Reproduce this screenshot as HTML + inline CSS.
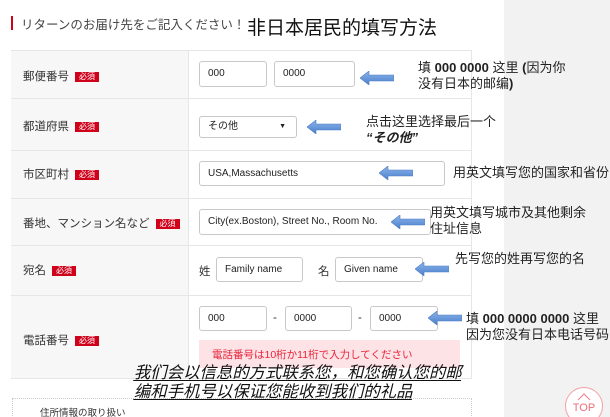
<!DOCTYPE html>
<html><head><meta charset="utf-8"><style>
*{margin:0;padding:0;box-sizing:border-box}
html,body{width:610px;height:417px;overflow:hidden}
body{background:#fff;position:relative;font-family:"Liberation Sans","Noto Sans CJK JP",sans-serif;color:#333}
.a{position:absolute}
.gray{left:504px;top:0;width:106px;height:417px;background:#f2f2f2}
.tbl{left:11px;top:50px;width:461px;height:329px;border:1px solid #e6e6e6;background:#fff}
.lc{left:11px;width:177px;background:#f7f7f7}
.hr{left:11px;width:461px;height:1px;background:#e6e6e6}
.lab{font-size:11.5px;color:#333}
.bd{display:inline-block;background:#d0021b;color:#fff;font-size:8px;line-height:10px;padding:0 4px;margin-left:6px;vertical-align:1px}
.in{border:1px solid #c8c8c8;border-radius:3px;background:#fff;font-size:10px;color:#222;padding-left:8px;white-space:nowrap}
.ann{font-family:"Liberation Sans","Noto Sans CJK SC",sans-serif;font-size:13px;color:#222;line-height:16px}
.arr{width:34px;height:14px}
.it{display:block;transform:skewX(-14deg);text-decoration:underline;text-underline-offset:2px}
</style></head><body>
<div class="a gray"></div>
<div class="a" style="left:11px;top:16px;width:2px;height:14px;background:#d0021b"></div>
<div class="a" style="left:21px;top:14px;font-size:12.5px;color:#444">リターンのお届け先をご記入ください！</div>
<div class="a" style="left:247px;top:13px;font-size:19px;color:#111;font-family:'Liberation Sans','Noto Sans CJK SC',sans-serif">非日本居民的填写方法</div>
<div class="a tbl"></div>
<div class="a lc" style="top:51px;height:327px"></div>
<div class="a" style="left:188px;top:51px;width:1px;height:327px;background:#e6e6e6"></div>
<div class="a hr" style="top:98px"></div>
<div class="a hr" style="top:150px"></div>
<div class="a hr" style="top:198px"></div>
<div class="a hr" style="top:245px"></div>
<div class="a hr" style="top:295px"></div>

<div class="a lab" style="left:23px;top:68px">郵便番号<span class="bd">必須</span></div>
<div class="a lab" style="left:23px;top:118px">都道府県<span class="bd">必須</span></div>
<div class="a lab" style="left:23px;top:166px">市区町村<span class="bd">必須</span></div>
<div class="a lab" style="left:23px;top:215px">番地、マンション名など<span class="bd">必須</span></div>
<div class="a lab" style="left:23px;top:262px">宛名<span class="bd">必須</span></div>
<div class="a lab" style="left:23px;top:332px">電話番号<span class="bd">必須</span></div>

<div class="a in" style="left:199px;top:61px;width:68px;height:26px;line-height:24px">000</div>
<div class="a in" style="left:274px;top:61px;width:81px;height:26px;line-height:24px">0000</div>
<div class="a in" style="left:199px;top:116px;width:98px;height:22px;line-height:20px">その他<span style="position:absolute;right:10px;font-size:7px">▼</span></div>
<div class="a in" style="left:199px;top:161px;width:246px;height:25px;line-height:23px">USA,Massachusetts</div>
<div class="a in" style="left:199px;top:209px;width:232px;height:26px;line-height:24px">City(ex.Boston), Street No., Room No.</div>
<div class="a lab" style="left:199px;top:263px">姓</div>
<div class="a in" style="left:216px;top:257px;width:87px;height:25px;line-height:23px">Family name</div>
<div class="a lab" style="left:318px;top:263px">名</div>
<div class="a in" style="left:335px;top:257px;width:88px;height:25px;line-height:23px">Given name</div>
<div class="a in" style="left:199px;top:306px;width:68px;height:25px;line-height:23px">000</div>
<div class="a lab" style="left:273px;top:312px">-</div>
<div class="a in" style="left:285px;top:306px;width:67px;height:25px;line-height:23px">0000</div>
<div class="a lab" style="left:358px;top:312px">-</div>
<div class="a in" style="left:370px;top:306px;width:68px;height:25px;line-height:23px">0000</div>
<div class="a" style="left:199px;top:340px;width:261px;height:28px;background:#fde2e6"></div>
<div class="a" style="left:212px;top:347px;font-size:10.5px;color:#e8233a">電話番号は10桁か11桁で入力してください</div>

<svg width="0" height="0" style="position:absolute"><defs><linearGradient id="g" x1="0" y1="0" x2="0" y2="1"><stop offset="0" stop-color="#8db4ea"/><stop offset="1" stop-color="#4a7fcc"/></linearGradient><symbol id="ar" viewBox="0 0 34 14"><path d="M0 7 L9 0 V4 H34 V10 H9 V14 Z" fill="url(#g)" stroke="#4f7fc4" stroke-width="0.6"/></symbol></defs></svg>
<svg class="a arr" style="left:360px;top:71px"><use href="#ar"/></svg>
<svg class="a arr" style="left:307px;top:120px"><use href="#ar"/></svg>
<svg class="a arr" style="left:379px;top:166px"><use href="#ar"/></svg>
<svg class="a arr" style="left:391px;top:215px"><use href="#ar"/></svg>
<svg class="a arr" style="left:415px;top:262px"><use href="#ar"/></svg>
<svg class="a arr" style="left:428px;top:311px"><use href="#ar"/></svg>

<div class="a ann" style="left:418px;top:60px">填 <b>000 0000</b> 这里 <b>(</b>因为你<br>没有日本的邮编<b>)</b></div>
<div class="a ann" style="left:366px;top:114px">点击这里选择最后一个<br><b><i>“その他”</i></b></div>
<div class="a ann" style="left:453px;top:165px">用英文填写您的国家和省份</div>
<div class="a ann" style="left:430px;top:205px">用英文填写城市及其他剩余<br>住址信息</div>
<div class="a ann" style="left:455px;top:251px">先写您的姓再写您的名</div>
<div class="a ann" style="left:466px;top:311px">填 <b>000 0000 0000</b> 这里<br>因为您没有日本电话号码</div>

<div class="a" style="left:12px;top:398px;width:460px;height:30px;border:1px dotted #ccc;border-bottom:none"></div>
<div class="a" style="left:40px;top:405px;font-size:9.5px;color:#333">住所情報の取り扱い</div>
<div class="a" style="left:135px;top:364px;font-family:'Liberation Sans','Noto Sans CJK SC',sans-serif;font-size:16.4px;line-height:19px;color:#111"><span class="it">我们会以信息的方式联系您，和您确认您的邮</span><span class="it">编和手机号以保证您能收到我们的礼品</span></div>

<div class="a" style="left:565px;top:387px;width:38px;height:38px;border:1.5px solid #f4a0a8;border-radius:50%;background:#fff"></div>
<svg class="a" style="left:577px;top:393px" width="14" height="8"><path d="M1 7 L7 1 L13 7" fill="none" stroke="#f08a96" stroke-width="1.2"/></svg>
<div class="a" style="left:569px;top:402px;width:30px;text-align:center;font-size:11px;color:#ee6e7c">TOP</div>
</body></html>
